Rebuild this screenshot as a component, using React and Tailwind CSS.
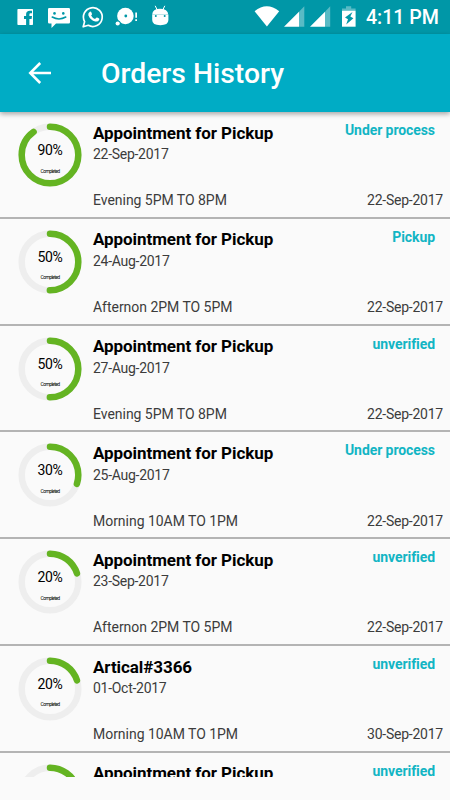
const orders = [
  { pct: 90, title: 'Appointment for Pickup', date: '22-Sep-2017', slot: 'Evening 5PM TO 8PM', status: 'Under process', due: '22-Sep-2017' },
  { pct: 50, title: 'Appointment for Pickup', date: '24-Aug-2017', slot: 'Afternon 2PM TO 5PM', status: 'Pickup', due: '22-Sep-2017' },
  { pct: 50, title: 'Appointment for Pickup', date: '27-Aug-2017', slot: 'Evening 5PM TO 8PM', status: 'unverified', due: '22-Sep-2017' },
  { pct: 30, title: 'Appointment for Pickup', date: '25-Aug-2017', slot: 'Morning 10AM TO 1PM', status: 'Under process', due: '22-Sep-2017' },
  { pct: 20, title: 'Appointment for Pickup', date: '23-Sep-2017', slot: 'Afternon 2PM TO 5PM', status: 'unverified', due: '22-Sep-2017' },
  { pct: 20, title: 'Artical#3366', date: '01-Oct-2017', slot: 'Morning 10AM TO 1PM', status: 'unverified', due: '30-Sep-2017' },
  { pct: 20, title: 'Appointment for Pickup', status: 'unverified', partial: true },
];

function LeftIcons() {
  return (
    <svg width="180" height="34" viewBox="0 0 180 34" fill="#fff">
      {/* facebook */}
      <path d="M18.200 9H32.200Q33 9 33 9.800V24.200Q33 25 32.200 25H29.400V18.900H31.600L32 16.100H29.400V14.500Q29.400 13.300 30.600 13.300H32V10.700H29.900Q26.100 10.700 26.100 14.300V16.100H24V18.900H26.100V25H18.200Q17.400 25 17.400 24.200V9.800Q17.400 9 18.200 9Z" />
      {/* messaging */}
      <path d="M49.300 8H68.700Q70 8 70 9.300V22.300Q70 23.600 68.700 23.600H56L51.500 28V23.600H49.300Q48 23.600 48 22.300V9.300Q48 8 49.300 8Z" />
      <circle cx="54.500" cy="13.400" r="1.300" fill="#0097a7" />
      <circle cx="63.300" cy="13.400" r="1.300" fill="#0097a7" />
      <path d="M52.200 17Q59 20.800 65.800 17" fill="none" stroke="#0097a7" strokeWidth="1.500" strokeLinecap="round" />
      {/* whatsapp */}
      <path d="M83.200 26.800L84.600 21.600A9.400 9.400 0 1 1 88.300 25.300Z" fill="none" stroke="#fff" strokeWidth="1.700" strokeLinejoin="round" />
      <path d="M89.900 11.700Q90.700 11.200 91.200 12.100L92 13.900Q92.100 14.500 91.100 15.600Q92.300 18 95 19.100L96.300 17.700Q96.700 17.300 97.200 17.600L99.100 18.500Q99.500 18.800 99.200 19.700Q98.300 22 95.300 21.500Q90.400 20.200 88.300 15.200Q87.900 12.900 89.900 11.700Z" />
      {/* disc with alert */}
      <circle cx="125.400" cy="16" r="8.300" />
      <circle cx="125.800" cy="16" r="1.400" fill="#0097a7" />
      <circle cx="117.700" cy="23.500" r="3" fill="#0097a7" />
      <circle cx="117.700" cy="23.500" r="2.100" />
      <path d="M135.300 12.500H137V17.700H135.300ZM135.300 19.200H137V21H135.300Z" />
      {/* android head */}
      <path d="M155.200 5.800L157 9.500M164.800 5.800L163 9.500" stroke="#fff" strokeWidth="1" />
      <path d="M152.200 14.400Q152.500 8.800 160 8.800Q167.800 8.800 168.200 14.400Z" />
      <path d="M152.200 14.400H168.400V20Q168.400 25.200 160.300 25.200Q152.200 25.200 152.200 20Z" />
      <circle cx="155.800" cy="16" r="1" fill="#0097a7" />
      <circle cx="164.700" cy="16" r="1" fill="#0097a7" />
    </svg>
  );
}

function RightIcons() {
  return (
    <svg width="108" height="34" viewBox="252 0 108 34" fill="#fff">
      <path d="M254.600 11.200Q266.700 1.500 279.200 11.200L266.900 26.400Z" />
      <path d="M304.300 6.300V26.700H299V11.700Z" opacity=".35" />
      <path d="M299 11.700V26.700H284Z" />
      <path d="M330.200 6.300V26.700H325V11.700Z" opacity=".35" />
      <path d="M325 11.700V26.700H310Z" />
      <path d="M342 10.700V8.600H346V6.300H351.200V8.600H355.600V10.700Z" opacity=".35" />
      <path d="M342 10.700H355.600V26.700H342Z" />
      <path d="M352.500 12L345 17.400L348 19.200L346.200 24.500L353.400 18.200L350.300 16.600Z" fill="#0097a7" />
    </svg>
  );
}

function Ring({ pct, partial }) {
  const c = 2 * Math.PI * 28.3;
  return (
    <div className="relative mt-[11px] ml-[18px] h-16 w-16 shrink-0 text-center text-black">
      <svg className="block" width="64" height="64" viewBox="0 0 64 64" fill="none" strokeWidth="6.5">
        <circle cx="32" cy="32" r="28.3" stroke="#eeeeee" />
        <circle cx="32" cy="32" r="28.3" stroke="#64b422" strokeLinecap="round" strokeDasharray={`${(c * pct) / 100} ${c}`} transform="rotate(-90 32 32)" />
      </svg>
      {!partial && (
        <>
          <div className="absolute inset-x-0 top-[18px] text-[14px] leading-[18px] tracking-[-0.3px]">{pct}%</div>
          <div className="absolute inset-x-0 top-[43.500px] text-[5px] leading-[8px] tracking-[-0.6px]">Completed</div>
        </>
      )}
    </div>
  );
}

function Order({ order }) {
  return (
    <li className="flex h-[106.8px] border-b-2 border-[#b4b4b4]">
      <Ring pct={order.pct} partial={order.partial} />
      <div className="ml-[11px] flex flex-1 flex-col pr-[7px] text-[14px] leading-[18px] text-[#3c3c3c]">
        <div className="flex justify-between pt-[9px] pr-[8px]">
          <span className="pt-[1.700px] text-[17px] leading-[20px] font-bold tracking-[-0.07px] text-black">{order.title}</span>
          <span className="text-[14px] leading-[18px] font-bold tracking-[-0.08px] text-[#12b5c4]">{order.status}</span>
        </div>
        {!order.partial && (
          <>
            <div className="mt-[2.500px] tracking-[-0.28px]">{order.date}</div>
            <div className="mt-[28px] flex justify-between">
              <span className="tracking-[-0.03px]">{order.slot}</span>
              <span className="tracking-[-0.24px]">{order.due}</span>
            </div>
          </>
        )}
      </div>
    </li>
  );
}

export default function App() {
  return (
    <div className="flex h-[800px] w-[450px] flex-col overflow-hidden bg-[#fafafa] font-[Roboto,sans-serif]">
      <div className="z-10 flex h-[34px] shrink-0 justify-between bg-[#0097a7] text-white">
        <LeftIcons />
        <div className="flex pr-[11px]">
          <RightIcons />
          <span className="ml-[6px] text-[19.600px] leading-[36px] font-medium">4:11 PM</span>
        </div>
      </div>
      <header className="z-10 flex h-[78px] shrink-0 items-center bg-[#00acc5] text-white shadow-[0_2px_5px_rgba(0,0,0,0.35)]">
        <svg className="ml-[27px]" width="26" height="26" viewBox="0 0 26 26" fill="none" stroke="#fff" strokeWidth="2.5">
          <path d="M24 13H3.500M13.200 3L3.200 13L13.200 23" />
        </svg>
        <h1 className="ml-[48px] pt-px text-[28.300px] leading-[36px] font-medium">Orders History</h1>
      </header>
      <ul className="h-[665px] shrink-0 overflow-hidden">
        {orders.map((order, i) => (
          <Order key={i} order={order} />
        ))}
      </ul>
    </div>
  );
}
